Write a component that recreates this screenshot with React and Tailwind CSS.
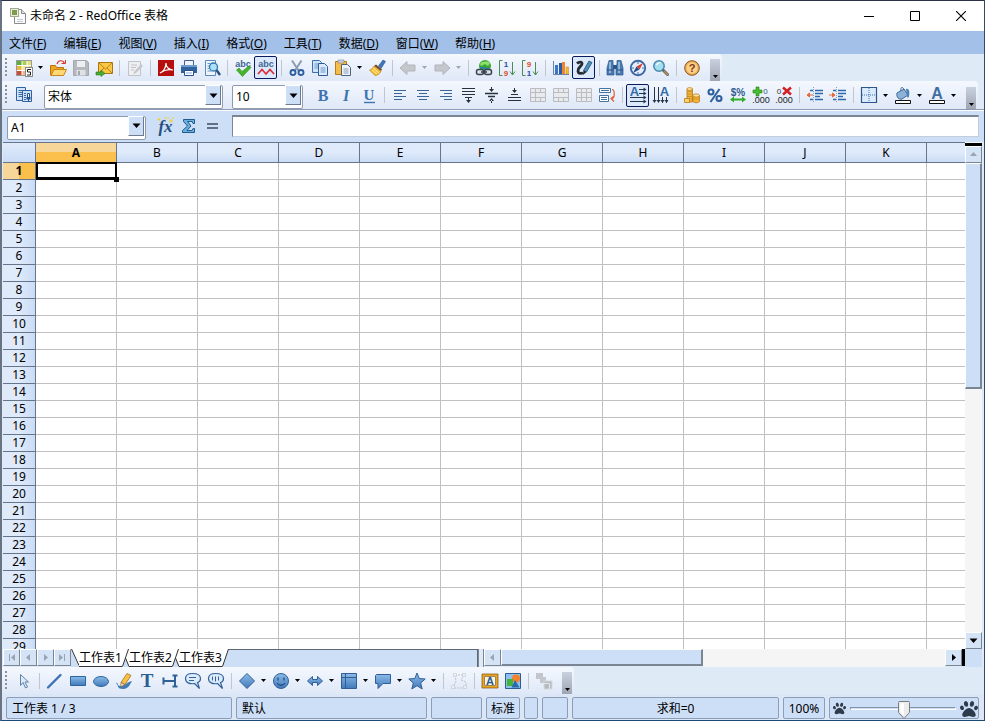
import { useState } from "react";
import { FaPaw } from "react-icons/fa";

const menus = [
    ["文件", "F"],
    ["编辑", "E"],
    ["视图", "V"],
    ["插入", "I"],
    ["格式", "O"],
    ["工具", "T"],
    ["数据", "D"],
    ["窗口", "W"],
    ["帮助", "H"],
];

const columns = ["A", "B", "C", "D", "E", "F", "G", "H", "I", "J", "K"];
const rows = Array.from({ length: 29 }, (_, i) => i + 1);
const sheets = ["工作表1", "工作表2", "工作表3"];

// Glyphs on an 18x18 grid
const icons = {
    document: (
        <>
            <path d="M5.500 2.500h7l4 4v10h-11z" fill="#fafafa" stroke="#8b8b8b" />
            <path d="M12.500 2.500v4h4" fill="#ddd" stroke="#8b8b8b" />
            <path d="M8 12.500h6M8 14.500h6" stroke="#c3cbd2" />
            <rect x="1.500" y="1.500" width="8" height="8" fill="#e9efdc" stroke="#a3aa94" />
            <rect x="3" y="3" width="5" height="5" fill="#7f9a4a" />
        </>
    ),
    newSheet: (
        <>
            <rect x="1.500" y="1.500" width="15" height="15" fill="#fff" stroke="#999" />
            <path d="M2 2h5v4H2z" fill="#5fae3c" />
            <path d="M7 2h5v4H7z" fill="#a8cf5a" />
            <path d="M12 2h4v6h-4z" fill="#e4e27c" />
            <path d="M2 6h5v5H2z" fill="#e9b83a" />
            <path d="M7 6h5v5H7z" fill="#f6e7a0" />
            <path d="M2 11h5v5H2z" fill="#cf4a36" />
            <path d="M7 11h3v5H7z" fill="#f0b98c" />
            <path d="M7 2v14M12 2v7M2 6.500h14M2 11.500h8" stroke="#fff" />
            <rect x="10.500" y="8.500" width="7" height="9" fill="#fff" stroke="#888" />
            <path d="M16 10.500h-3.500v2.500h3v3H12" fill="none" stroke="#222" />
        </>
    ),
    open: (
        <>
            <path d="M1.500 16V6.500h5l1 2h7V16z" fill="#eda523" stroke="#b87410" />
            <path d="M2 16.500l3-6h12.500l-3 6z" fill="#ffd873" stroke="#c98516" />
            <path d="M8 5c1-4 6-4.500 7.500-.5" fill="none" stroke="#d8362a" strokeWidth="1.200" />
            <path d="M12.500 4.500h4V1" fill="none" stroke="#d8362a" />
        </>
    ),
    save: (
        <>
            <path d="M1.500 1.500h13l2 2v13h-15z" fill="#b5b8be" stroke="#a4a7ad" />
            <path d="M5 2h8v6H5z" fill="#eceef1" />
            <path d="M4.500 11h9v5.500h-9z" fill="#dfe1e5" />
            <path d="M6 12h2v4H6z" fill="#a4a7ad" />
        </>
    ),
    mail: (
        <>
            <path d="M3.500 3.500h14v11h-14z" fill="#fbc845" stroke="#a8770f" />
            <path d="M4 4l6.500 6 6.500-6M4 14l5-5M17 14l-5-5" fill="none" stroke="#b98414" />
            <path d="M1 13h5v-2l4 3.500-4 3V16H1z" fill="#49ad33" stroke="#2d7b1e" strokeWidth=".6" />
        </>
    ),
    edit: (
        <>
            <path d="M2.500 2.500h12v14h-12z" fill="#eeeff1" stroke="#c0c3c8" />
            <path d="M5 6h6M5 8.500h5M5 11h3" stroke="#c0c3c8" />
            <path d="M8 13l7-8 2 2-7 7-2.500 1z" fill="#c3c6cb" />
        </>
    ),
    pdf: (
        <>
            <path d="M1 1h16v16H1z" fill="#b80d0d" />
            <path d="M3 14c3-1 6-5 6-10 0 4 3 7 7 7-4-1-9 0-13 3z" fill="none" stroke="#fff" strokeWidth="1.200" />
        </>
    ),
    print: (
        <>
            <path d="M4.500 1.500h9v5h-9z" fill="#eef4fb" stroke="#41628f" />
            <path d="M1 6h16v8H1z" fill="#2f639f" />
            <path d="M1 6h16v2H1z" fill="#6f9bcb" />
            <path d="M4.500 11.500h9v5h-9z" fill="#fff" stroke="#2b5387" />
            <path d="M6 14h6" stroke="#7fa9d6" />
        </>
    ),
    preview: (
        <>
            <path d="M2.500 1.500h10v15h-10z" fill="#eef5fc" stroke="#5b88bd" />
            <path d="M4.500 4.500h3M4.500 7h2M4.500 9.500h2M4.500 12h4" stroke="#6c94c4" />
            <circle cx="10.500" cy="8" r="4" fill="#aee0f6" stroke="#2e7bb0" strokeWidth="1.300" />
            <path d="M13.500 11l3.500 5" stroke="#27517f" strokeWidth="2.400" />
        </>
    ),
    spell: (
        <>
            <text x="9" y="7.500" textAnchor="middle" fontSize="9" fontWeight="700" fill="#3c6694">abc</text>
            <path d="M2.500 11L5 9l3 3.500L15 7l2 1.500-8.500 9z" fill="#45b52b" stroke="#2a871b" strokeWidth=".6" />
        </>
    ),
    autoSpell: (
        <>
            <text x="9" y="7.500" textAnchor="middle" fontSize="9" fontWeight="700" fill="#3c6694">abc</text>
            <path d="M1 15l4-4.500L9 15l4-4.500 4 4.500" fill="none" stroke="#dc2a35" strokeWidth="1.600" />
        </>
    ),
    cut: (
        <>
            <path d="M4 1.500l6.500 10M13.500 1.500L7 11.500" stroke="#8b9cb1" strokeWidth="2" />
            <circle cx="5" cy="13.500" r="2.500" fill="none" stroke="#2e5f9e" strokeWidth="1.900" />
            <circle cx="13" cy="13.500" r="2.500" fill="none" stroke="#2e5f9e" strokeWidth="1.900" />
        </>
    ),
    copy: (
        <>
            <path d="M1.500 1.500h7l2 2v10h-9z" fill="#cfe3f8" stroke="#3a70b0" />
            <path d="M3.500 5h5M3.500 7h4M3.500 9h4" stroke="#6a97cb" />
            <path d="M7.500 4.500h6l3 3v9h-9z" fill="#dcebfb" stroke="#2a5d9a" />
            <path d="M9.500 9h5M9.500 11h5M9.500 13h5" stroke="#6a97cb" />
        </>
    ),
    paste: (
        <>
            <path d="M1.500 2.500h11v13h-11z" fill="#f5bd45" stroke="#b67d18" />
            <path d="M4 1h6v3H4z" fill="#c9ced6" stroke="#808893" strokeWidth=".6" />
            <path d="M7.500 5.500h6l3 3v8h-9z" fill="#eef3f8" stroke="#4d6480" />
            <path d="M9.500 10h5M9.500 12h5M9.500 14h5" stroke="#8aa0bb" />
        </>
    ),
    brush: (
        <>
            <path d="M10.500 7L15 1l2.500 1.500-4.500 7z" fill="#3f76ba" stroke="#27548f" strokeWidth=".6" />
            <path d="M8 5.500l6 5-1 1.500-7-5z" fill="#6b4a33" />
            <path d="M6 7l7 5.500c-2 3-4 4-6 4L1.500 11c2 0 3-2 4.500-4z" fill="#f8bd32" stroke="#c07f16" strokeWidth=".7" />
            <path d="M4 11l5 4M5 9l6 5" stroke="#fff0a7" />
        </>
    ),
    undo: <path d="M1 9l7-6.500v3.500h8v6H8v3.500z" fill="#c4c7cc" stroke="#b2b5bb" />,
    redo: <path d="M17 9l-7-6.500v3.500H2v6h8v3.500z" fill="#c4c7cc" stroke="#b2b5bb" />,
    link: (
        <>
            <circle cx="10" cy="7" r="6" fill="#3ea72e" />
            <path d="M5 5c2-3 8-3 10-1l-2 3-3-2-4 2z" fill="#8ee06e" />
            <path d="M5 9c3-1 6 0 9 1" stroke="#2b7cc0" fill="none" strokeWidth="1.500" />
            <rect x="1.500" y="10.500" width="7" height="5" rx="2" fill="#dce2e9" stroke="#3a4350" strokeWidth="1.500" />
            <rect x="9.500" y="10.500" width="7" height="5" rx="2" fill="#dce2e9" stroke="#3a4350" strokeWidth="1.500" />
            <path d="M6 13h6" stroke="#3a4350" strokeWidth="1.600" />
        </>
    ),
    sortAsc: (
        <>
            <path d="M4.500 1.500h-3v15h3M14.500 3v13M12 12.500l2.500 3.500 2.500-3.500" fill="none" stroke="#4d8d52" />
            <text x="8" y="7.500" textAnchor="middle" fontSize="8" fontWeight="700" fill="#2c4fa5">1</text>
            <text x="8" y="17" textAnchor="middle" fontSize="8" fontWeight="700" fill="#dd4c2c">9</text>
        </>
    ),
    sortDesc: (
        <>
            <path d="M4.500 1.500h-3v15h3M14.500 3v13M12 12.500l2.500 3.500 2.500-3.500" fill="none" stroke="#4d8d52" />
            <text x="8" y="7.500" textAnchor="middle" fontSize="8" fontWeight="700" fill="#dd4c2c">9</text>
            <text x="8" y="17" textAnchor="middle" fontSize="8" fontWeight="700" fill="#2c4fa5">1</text>
        </>
    ),
    chart: (
        <>
            <path d="M1.500 2v13.500H17" fill="none" stroke="#6884a8" />
            <path d="M3 6h3v9H3z" fill="#3878c6" />
            <path d="M7 4h3v11H7z" fill="#285da6" />
            <path d="M10 3h3v12h-3z" fill="#f5832a" />
            <path d="M14 8h2.500v7H14z" fill="#f0c02c" stroke="#c9812a" strokeWidth=".5" />
        </>
    ),
    draw: (
        <>
            <path d="M2 4.500c2-2 5.500-2 5 .5S2.500 8.500 3 12s4 2.500 5 1.500" fill="none" stroke="#252b33" strokeWidth="2.800" />
            <path d="M8.500 11.500L14 2l3 1.500-5.500 9.500z" fill="#4a8fbe" stroke="#234d74" strokeWidth=".8" />
            <path d="M8.500 11.500l3 1.500-3.500 3z" fill="#222" />
        </>
    ),
    find: (
        <>
            <path d="M3 1.500h4v3.500l1 3v8H1V9z" fill="#4a7ab1" stroke="#2b568a" strokeWidth=".7" />
            <path d="M15 1.500h-4v3.500l-1 3v8h7V9z" fill="#4a7ab1" stroke="#2b568a" strokeWidth=".7" />
            <path d="M7 6h4v4H7z" fill="#2b568a" />
            <path d="M4 3v11M13 3v11" stroke="#a9c8e8" strokeWidth="1.500" />
            <path d="M1 11h6M11 11h6" stroke="#274e7e" />
        </>
    ),
    navigator: (
        <>
            <circle cx="9" cy="9" r="7.200" fill="#e3eefa" stroke="#3d68a3" strokeWidth="1.900" />
            <path d="M9 3v2M9 13v2M3 9h2M13 9h2" stroke="#4772a8" />
            <path d="M14 4l-3.500 6.500-3-3z" fill="#d64133" />
            <path d="M4 14l3.500-6.500 3 3z" fill="#274f8c" />
        </>
    ),
    magnifier: (
        <>
            <circle cx="7" cy="7" r="5.200" fill="#a5deee" stroke="#4689ac" strokeWidth="1.500" />
            <path d="M4.500 6c1-2 3-2.500 4-2" fill="none" stroke="#fff" strokeWidth="1.300" />
            <path d="M11.500 11.500l4 4" stroke="#5a6673" strokeWidth="3" strokeLinecap="round" />
            <path d="M12.500 12.500l3 3" stroke="#c98a43" strokeWidth="1.400" strokeLinecap="round" />
        </>
    ),
    help: (
        <>
            <circle cx="9" cy="9" r="7.300" fill="#f0a94a" stroke="#8a5a26" />
            <circle cx="9" cy="9" r="5.700" fill="#fbd08a" />
            <text x="9" y="13" textAnchor="middle" fontSize="11" fontWeight="700" fill="#7a3d12">?</text>
        </>
    ),
    styles: (
        <>
            <path d="M1.500 1.500h9v13h-9z" fill="#d5e5f8" stroke="#2f62a4" />
            <path d="M3.500 4.500h5M3.500 6.500h4M3.500 8.500h4M3.500 10.500h4" stroke="#3968a6" />
            <path d="M7.500 4.500h9v11h-9z" fill="#cfe1f5" stroke="#2f62a4" />
            <path d="M9 7.500h2M9 9.500h2M9 11.500h2M9 13.500h2" stroke="#3968a6" />
            <path d="M12.500 7.500h2v4h-2z" fill="#f4f8fd" stroke="#2c5388" />
            <path d="M11.500 11h4v2.500h-1.500v2h-1v-2h-1.500z" fill="#2c5388" />
        </>
    ),
    bold: <text x="9" y="15" textAnchor="middle" fontSize="16" fontWeight="700" fontFamily="Liberation Serif, serif" fill="#3e73b0">B</text>,
    italic: <text x="9" y="15" textAnchor="middle" fontSize="16" fontWeight="700" fontStyle="italic" fontFamily="Liberation Serif, serif" fill="#3e73b0">I</text>,
    underline: (
        <>
            <text x="9" y="14" textAnchor="middle" fontSize="15" fontWeight="700" fontFamily="Liberation Serif, serif" fill="#3e73b0">U</text>
            <path d="M4 16.500h11" stroke="#3e73b0" strokeWidth="1.400" />
        </>
    ),
    left: <path d="M3 4.500h12M3 7.500h8M3 10.500h12M3 13.500h8" stroke="#3a6496" />,
    center: <path d="M3 4.500h12M5 7.500h8M3 10.500h12M5 13.500h8" stroke="#3a6496" />,
    right: <path d="M3 4.500h12M7 7.500h8M3 10.500h12M7 13.500h8" stroke="#3a6496" />,
    top: (
        <>
            <path d="M2 2.500h13M2 5.500h13M2 8.500h13M5 11.500h7" stroke="#27313c" />
            <path d="M6 14h5l-2.500 3zM8 12h1v3H8z" fill="#27313c" />
        </>
    ),
    middle: (
        <>
            <path d="M2 7.500h13M5 10.500h7" stroke="#27313c" strokeWidth="1.400" />
            <path d="M6 3h5L8.500 6zM8 1h1v3H8zM6 15h5l-2.500-3zM8 14h1v3H8z" fill="#27313c" />
        </>
    ),
    bottom: (
        <>
            <path d="M5 8.500h7M2 11.500h13M2 14.500h13" stroke="#27313c" />
            <path d="M6 4h5L8.500 7zM8 2h1v3H8z" fill="#27313c" />
        </>
    ),
    merge: (
        <>
            <path d="M2 2h14v14H2z" fill="#e9eaec" />
            <path d="M1.500 2.500h15v13h-15zM1.500 6.500h15M1.500 11.500h15M6.500 2.500v13M11.500 2.500v4M11.500 11.500v4" fill="none" stroke="#b9bcc2" />
        </>
    ),
    split: (
        <>
            <path d="M2 2h14v14H2z" fill="#e9eaec" />
            <path d="M1.500 2.500h15v13h-15zM1.500 6.500h15M1.500 11.500h15M6.500 2.500v4M11.500 2.500v4M6.500 11.500v4M11.500 11.500v4" fill="none" stroke="#b9bcc2" />
        </>
    ),
    cells: (
        <>
            <path d="M2 2h14v14H2z" fill="#e9eaec" />
            <path d="M1.500 2.500h15v13h-15zM1.500 6.500h15M1.500 11.500h15M6.500 2.500v13M11.500 2.500v13" fill="none" stroke="#b9bcc2" />
        </>
    ),
    wrap: (
        <>
            <path d="M1.500 2.500h11v4h-11zM1.500 9.500h9v6h-9z" fill="#fff" stroke="#45749f" />
            <path d="M3 4.500h8M3 11.500h6M3 13.500h6" stroke="#3f719f" />
            <path d="M14 3.500c3 0 3 9 0 9M16 10l-3 2.500 3 3" fill="none" stroke="#e15d35" strokeWidth="1.200" />
        </>
    ),
    textHoriz: (
        <>
            <text x="5.500" y="10" textAnchor="middle" fontSize="13" fontWeight="700" fill="#346ca8">A</text>
            <path d="M10 3.500h6M10 7.500h6M1 11.500h15M1 15.500h15" stroke="#26364a" />
            <path d="M14.500 1.500l3 2-3 2zM14.500 5.500l3 2-3 2zM14.500 9.500l3 2-3 2zM14.500 13.500l3 2-3 2z" fill="#26364a" />
        </>
    ),
    textVert: (
        <>
            <text x="12.500" y="10" textAnchor="middle" fontSize="13" fontWeight="700" fill="#346ca8">A</text>
            <path d="M2.500 1v15M6.500 1v15M10.500 11v6M14.500 11v6" stroke="#26364a" />
            <path d="M.5 14l2 3 2-3zM4.500 14l2 3 2-3zM8.500 14l2 3 2-3zM12.500 14l2 3 2-3z" fill="#26364a" />
        </>
    ),
    currency: (
        <>
            <path d="M4 3h5.500v13H4z" fill="#f2b33a" stroke="#b97a1a" strokeWidth=".8" />
            <path d="M4 5.500h5.500M4 8h5.500M4 10.500h5.500M4 13h5.500" stroke="#c98a22" strokeWidth=".8" />
            <ellipse cx="6.700" cy="3" rx="2.800" ry="1.400" fill="#ffe39a" stroke="#b97a1a" strokeWidth=".7" />
            <path d="M1.500 12.500h5v4h-5z" fill="#ffd56c" stroke="#b97a1a" strokeWidth=".8" />
            <path d="M10 9.500v6c1 1.700 5.500 1.700 6.500 0v-6z" fill="#f2b33a" stroke="#b97a1a" strokeWidth=".8" />
            <path d="M10 12c1 1.500 5.500 1.500 6.500 0" fill="none" stroke="#c98a22" strokeWidth=".8" />
            <ellipse cx="13.200" cy="9.500" rx="3.200" ry="1.600" fill="#ffe39a" stroke="#b97a1a" strokeWidth=".8" />
        </>
    ),
    percent: (
        <>
            <circle cx="5" cy="6" r="2.500" fill="none" stroke="#2f609d" strokeWidth="2.100" />
            <circle cx="13" cy="12.500" r="2.500" fill="none" stroke="#2f609d" strokeWidth="2.100" />
            <path d="M13.500 3l-9 13" stroke="#2f609d" strokeWidth="2" />
        </>
    ),
    standard: (
        <>
            <text x="9" y="9.500" textAnchor="middle" fontSize="10" fontWeight="700" fill="#315d92">$%</text>
            <path d="M3 13.500h12" stroke="#2fae2b" strokeWidth="2" />
            <path d="M5 10.500l-4 3 4 3zM13 10.500l4 3-4 3z" fill="#2fae2b" />
        </>
    ),
    addDecimal: (
        <>
            <path d="M4 1h3v3h3v3H7v3H4V7H1V4h3z" fill="#45bd2d" stroke="#238517" strokeWidth=".6" />
            <text x="13.500" y="7.500" textAnchor="middle" fontSize="8" fill="#33567f">0</text>
            <text x="9" y="17" textAnchor="middle" fontSize="9" fill="#222">.000</text>
        </>
    ),
    delDecimal: (
        <>
            <text x="4" y="7.500" textAnchor="middle" fontSize="8" fill="#333">0</text>
            <path d="M8 1.500l8 7M16 1.500l-8 7" stroke="#d41f24" strokeWidth="2.500" />
            <text x="9" y="17" textAnchor="middle" fontSize="9" fill="#222">.000</text>
        </>
    ),
    indentLess: (
        <>
            <path d="M4 4.500h3M9 4.500h8M9 7.500h8M9 10.500h5M4 13.500h3M9 13.500h8" stroke="#2f68aa" strokeWidth="1.400" />
            <path d="M7.500 1v16" stroke="#7f9fc6" strokeDasharray="1 1" />
            <path d="M7 9H3M3.500 7L1 9l2.500 2z" fill="#e36a36" stroke="#e36a36" />
        </>
    ),
    indentMore: (
        <>
            <path d="M4 4.500h3M9 4.500h8M9 7.500h8M9 10.500h5M4 13.500h3M9 13.500h8" stroke="#2f68aa" strokeWidth="1.400" />
            <path d="M7.500 1v16" stroke="#7f9fc6" strokeDasharray="1 1" />
            <path d="M0 9h4M3.500 7L6 9l-2.500 2z" fill="#e36a36" stroke="#e36a36" />
        </>
    ),
    borders: (
        <>
            <path d="M1.500 1.500h15v15h-15z" fill="#dcebfc" stroke="#2e568c" strokeWidth="1.200" />
            <path d="M9 2v14M2 9h14" stroke="#3f73b3" strokeDasharray="1 1" />
        </>
    ),
    fill: (
        <>
            <path d="M3 7l7-4 4 6-6 4c-3 1-6-2-5-6z" fill="#8db2d8" stroke="#3e6898" />
            <path d="M12 3c3-1 4 3 3 7 0 2-2 2-2 0z" fill="#4d82b9" />
            <path d="M7 5c-1-4 2-5 3-1" fill="none" stroke="#3e6898" />
            <path d="M1.500 14.500h15v3h-15z" fill="#fff" stroke="#111" />
        </>
    ),
    fontColor: (
        <>
            <text x="9" y="13" textAnchor="middle" fontSize="16" fontWeight="700" fill="#3e6e9f">A</text>
            <path d="M1.500 14.500h15v3h-15z" fill="#fff" stroke="#111" />
        </>
    ),
    fx: (
        <>
            <path d="M2 1v3M.5 2.500h3M8 0v2M14 2v4M12 4h4M16 0v2M4 6v2M11 0v2" stroke="#f1d02b" />
            <text x="8.500" y="15" textAnchor="middle" fontSize="17" fontStyle="italic" fontWeight="700" fontFamily="Liberation Serif, serif" fill="#264f7e">fx</text>
        </>
    ),
    sum: <path d="M3.500 2.500h11v4h-1.500l-1-2H7.500L11 9l-4 4.500h5l1-2h1.500v4h-12v-2L7.500 9l-4-4.500z" fill="#68b0df" stroke="#24598c" />,
    equals: <path d="M4 7h11M4 11h11" stroke="#3d4b5d" strokeWidth="1.600" />,
    pointer: <path d="M5.500 2.500v11l2.500-3 2.500 5.500 2-1-2.500-5h3.500z" fill="#dfeaf8" stroke="#6183ae" />,
    line: <path d="M2 15.500L14.500 3" stroke="#3d73b4" strokeWidth="2.400" strokeLinecap="round" />,
    rect: <path d="M1.500 4.500h15v9h-15z" fill="url(#blue)" stroke="#2f659f" />,
    ellipse: <ellipse cx="9" cy="9.500" rx="7.500" ry="5" fill="url(#blue)" stroke="#2f659f" />,
    freeform: (
        <>
            <path d="M1 11c3-1 0 3 5 3 5-1 6-4 11-5-3 6-5 8-9 8-6 0-4-3-7-6z" fill="#417cb9" />
            <path d="M6 10.500l6-9 4 2-6 9z" fill="#f6c347" stroke="#a96b19" strokeWidth=".8" />
            <path d="M6 10.500l4 2-4.500 2.500z" fill="#e9d3a8" stroke="#775522" strokeWidth=".5" />
        </>
    ),
    text: <text x="9" y="15" textAnchor="middle" fontSize="19" fontWeight="700" fontFamily="Liberation Serif, serif" fill="#285f96">T</text>,
    dimension: <path d="M2.500 5.500v7M2.500 9h12M14 3.500v11M11.500 3.500h5M11.500 14.500h5" fill="none" stroke="#2f6398" strokeWidth="2" />,
    balloonH: (
        <>
            <path d="M8.500 1.500c5 0 8 2 8 5 0 2-1 3.500-3 4l2 6-5-5c-5 1-9-1-9-5C1.500 3.500 4 1.500 8.500 1.500z" fill="#dcebfb" stroke="#33639c" strokeWidth="1.200" />
            <path d="M5 5.500h7M5 8.500h5" stroke="#33639c" />
        </>
    ),
    balloonV: (
        <>
            <path d="M8.500 1.500c5 0 8 2 8 5 0 2-1 3.500-3 4l2 6-5-5c-5 1-9-1-9-5C1.500 3.500 4 1.500 8.500 1.500z" fill="#dcebfb" stroke="#33639c" strokeWidth="1.200" />
            <path d="M5.500 4.500v4M8.500 4.500v5M11.500 4.500v4" stroke="#33639c" />
        </>
    ),
    diamond: <path d="M9 1.500L16.500 9 9 16.500 1.500 9z" fill="url(#blue)" stroke="#305f98" />,
    smiley: (
        <>
            <circle cx="9" cy="9" r="7.500" fill="url(#blue)" stroke="#305f98" />
            <path d="M6 5.500v3M12 5.500v3M5 11c2 3 6 3 8 0" fill="none" stroke="#204e83" strokeWidth="1.300" />
        </>
    ),
    arrows: <path d="M1.500 9l5-4.500v3h5v-3l5 4.500-5 4.500v-3h-5v3z" fill="url(#blue)" stroke="#305f98" />,
    flow: (
        <>
            <path d="M1.500 1.500h15v15h-15z" fill="url(#blue)" stroke="#305f98" />
            <path d="M5.500 2v14M2 5.500h14" stroke="#315d91" />
        </>
    ),
    callout: <path d="M2.500 2.500h14v9H9l-5 5v-5H1.500v-8z" fill="url(#blue)" stroke="#305f98" />,
    star: <path d="M9 1l2.200 5.500 6 .5-4.500 4 1.500 6L9 13.700 3.800 17l1.500-6L.8 7l6-.5z" fill="url(#blue)" stroke="#305f98" />,
    points: (
        <>
            <path d="M5 3h9l-3 5 5 2v6H3l3-7z" fill="none" stroke="#bec2c9" strokeDasharray="2 1" />
            <path d="M3.500 1.500h3v3h-3zM12.500 1.500h3v3h-3zM1.500 13.500h3v3h-3zM13.500 13.500h3v3h-3z" fill="#eef0f3" stroke="#c3c7cd" strokeWidth=".6" />
        </>
    ),
    fontwork: (
        <>
            <path d="M2 3h14v12H2z" fill="#fff6d9" stroke="#e9a51e" strokeWidth="2" />
            <path d="M1 2h16v14H1zM3.500 4.500h11v9h-11z" fill="none" stroke="#76511a" strokeWidth=".7" />
            <text x="9" y="13" textAnchor="middle" fontSize="11" fontWeight="700" fill="#245b9b">A</text>
        </>
    ),
    picture: (
        <>
            <path d="M1.500 1.500h15v15h-15z" fill="#8fc0ee" stroke="#2f5d91" />
            <circle cx="12" cy="6.500" r="4" fill="#f6812c" />
            <path d="M3 7h6v7H3z" fill="#45b438" />
            <path d="M11 8l4.500 7.500h-8z" fill="#276bb0" />
        </>
    ),
    extrusion: (
        <>
            <path d="M1 1h7v6H1zM5 5h6v6H5z" fill="#c3c7cd" />
            <path d="M9 9h8v8H9z" fill="#b6bac1" stroke="#d6d8dc" />
            <path d="M9 11.500h5.500V17" fill="none" stroke="#e6e8eb" />
        </>
    ),
};

// "|" is a separator, "v" a drop-down arrow ("x" when disabled), "*" marks a pressed tool
const standardBar = [
    "newSheet", "v", "open", "save", "mail", "|", "edit", "|", "pdf", "print", "preview", "|",
    "spell", "autoSpell*", "|", "cut", "copy", "paste", "v", "brush", "|", "undo", "x", "redo", "x", "|",
    "link", "sortAsc", "sortDesc", "|", "chart", "draw*", "|", "find", "navigator", "magnifier", "|", "help",
];

const formatBar = [
    "bold", "italic", "underline", "|", "left", "center", "right", "top", "middle", "bottom",
    "merge", "split", "cells", "wrap", "|", "textHoriz*", "textVert", "|",
    "currency", "percent", "standard", "addDecimal", "delDecimal", "|",
    "indentLess", "indentMore", "|", "borders", "v", "fill", "v", "fontColor", "v",
];

const drawBar = [
    "pointer", "|", "line", "rect", "ellipse", "freeform", "text", "dimension", "balloonH", "balloonV", "|",
    "diamond", "v", "smiley", "v", "arrows", "v", "flow", "v", "callout", "v", "star", "v", "|",
    "points", "|", "fontwork", "picture", "|", "extrusion",
];

function Icon({ name }) {
    return (
        <svg width="18" height="18" viewBox="0 0 18 18" className="shrink-0 overflow-visible font-['Liberation_Sans',sans-serif]" aria-hidden="true">
            {icons[name]}
        </svg>
    );
}

function Triangle({ dir = "down", className = "text-black" }) {
    const shapes = {
        down: "M.5 2.500h8L4.500 7z",
        up: "M1 6h7L4.500 2z",
        left: "M6 1v7L2 4.500z",
        right: "M3 1v7l4-3.500z",
        first: "M8 1v7L4 4.500zM2 1h1v7H2z",
        last: "M1 1v7l4-3.500zM6 1h1v7H6z",
    };
    return (
        <svg width="9" height="9" viewBox="0 0 9 9" className={className} aria-hidden="true">
            <path d={shapes[dir]} fill="currentColor" />
        </svg>
    );
}

function Tools({ items }) {
    return items.map((item, i) => {
        if (item === "|") {
            return (
                <span key={i} className="flex w-2 shrink-0 justify-center">
                    <span className="h-4 w-px bg-[#c0c5ce]" />
                </span>
            );
        }
        if (item === "v" || item === "x") {
            return (
                <button key={i} aria-label="更多" className="flex h-6 w-[11px] shrink-0 items-center justify-center">
                    <svg width="5" height="3" viewBox="0 0 5 3" aria-hidden="true">
                        <path d="M0 0h5L2.500 3z" fill={item === "v" ? "#000" : "#a3a6ac"} />
                    </svg>
                </button>
            );
        }
        const pressed = item.endsWith("*");
        const name = item.replace("*", "");
        return (
            <button
                key={i}
                aria-label={name}
                aria-pressed={pressed}
                className={[
                    "flex h-[23px] w-[23px] shrink-0 items-center justify-center",
                    pressed ? "rounded-xs border border-[#0a1a5c] bg-[#dce9fb]" : "",
                ].join(" ")}
            >
                <Icon name={name} />
            </button>
        );
    });
}

function Grip() {
    return <span className="mr-[5px] ml-[3px] h-5 w-0.5 shrink-0 bg-[repeating-linear-gradient(#8c9099_0_2px,transparent_2px_4px)]" />;
}

function Overflow() {
    return (
        <button aria-label="工具栏选项" className="ml-[7px] flex h-[22px] w-2.5 shrink-0 items-end justify-center self-end bg-linear-to-b from-[#c9d1e0] to-[#9fa5b1] pb-[3px]">
            <svg width="5" height="3" viewBox="0 0 5 3" aria-hidden="true">
                <path d="M0 0h5L2.500 3z" />
            </svg>
        </button>
    );
}

function Toolbar({ children, className }) {
    return (
        <div className={`flex shrink-0 bg-[#deeaf6] ${className}`}>
            <div className="flex items-center rounded-r-sm bg-linear-to-b from-[#f4f8fe] to-[#dfe8f8] pr-0.5">{children}</div>
        </div>
    );
}

function Combo({ label, value, className }) {
    return (
        <div className={`relative shrink-0 ${className}`}>
            <select
                aria-label={label}
                className="h-full w-full appearance-none rounded-xs border border-[#8f9aac] bg-white pl-[3px] text-xs text-black"
                defaultValue={value}
            >
                <option>{value}</option>
            </select>
            <span className="pointer-events-none absolute inset-y-0.5 right-0.5 flex w-4 items-center justify-center border border-t-white border-r-[#6f7a8c] border-b-[#6f7a8c] border-l-white bg-[#cddff7]">
                <Triangle />
            </span>
        </div>
    );
}

function ScrollButton({ dir, disabled }) {
    return (
        <button
            aria-label={dir}
            disabled={disabled}
            className="flex h-[17px] w-[17px] shrink-0 items-center justify-center border border-t-white border-r-[#7c8594] border-b-[#7c8594] border-l-white bg-[#d5e3f6]"
        >
            <Triangle dir={dir} className={disabled ? "text-[#9aa3b1]" : "text-black"} />
        </button>
    );
}

function TitleBar() {
    return (
        <header className="flex h-[30px] shrink-0 items-center bg-white pl-[7px]">
            <Icon name="document" />
            <h1 className="ml-[3px] grow text-xs">未命名 2 - RedOffice 表格</h1>
            <button aria-label="最小化" className="flex h-full w-[46px] items-center justify-center">
                <svg width="10" height="10" viewBox="0 0 10 10"><path d="M0 5.500h10" stroke="#000" /></svg>
            </button>
            <button aria-label="最大化" className="flex h-full w-[46px] items-center justify-center">
                <svg width="10" height="10" viewBox="0 0 10 10"><path d="M.5.5h9v9h-9z" fill="none" stroke="#000" /></svg>
            </button>
            <button aria-label="关闭" className="flex h-full w-[46px] items-center justify-center">
                <svg width="10" height="10" viewBox="0 0 10 10"><path d="M0 0l10 10M10 0L0 10" stroke="#000" strokeWidth="1.100" /></svg>
            </button>
        </header>
    );
}

function Sheet() {
    const head = "border-r border-b border-[#66758a] p-0 text-center text-xs leading-4";
    return (
        <div className="min-w-0 grow overflow-hidden">
            <table className="w-full table-fixed border-separate border-spacing-0">
                <colgroup>
                    <col className="w-[33px]" />
                    {columns.map((c) => (
                        <col key={c} className="w-[81px]" />
                    ))}
                    <col />
                </colgroup>
                <thead>
                    <tr className="h-[21px]">
                        <th className={`${head} border-t bg-linear-to-b from-[#e0ebfb] to-[#cadcf6]`} aria-label="全选" />
                        {columns.map((c, i) => (
                            <th
                                key={c}
                                scope="col"
                                className={[
                                    head,
                                    "border-t",
                                    i === 0
                                        ? "bg-linear-to-b from-[#f7d69a] from-50% to-[#fac04b] to-50% font-bold"
                                        : "bg-linear-to-b from-[#dfeafa] from-50% to-[#cadcf6] font-normal",
                                ].join(" ")}
                            >
                                {c}
                            </th>
                        ))}
                        <th className="border-t border-b border-[#66758a] bg-linear-to-b from-[#dfeafa] from-50% to-[#cadcf6]" aria-label="L" />
                    </tr>
                </thead>
                <tbody>
                    {rows.map((r) => (
                        <tr key={r} className="h-[17px]">
                            <th
                                scope="row"
                                className={[
                                    head,
                                    r === 1
                                        ? "bg-linear-to-r from-[#f7d69a] from-50% to-[#fac04b] to-50% font-bold"
                                        : "bg-linear-to-r from-[#dfeafa] from-50% to-[#cadcf6] font-normal",
                                ].join(" ")}
                            >
                                {r}
                            </th>
                            {columns.map((c) => (
                                <td key={c} className="relative border-r border-b border-[#c0c0c0] bg-white p-0">
                                    {r === 1 && c === "A" && (
                                        <span className="absolute -inset-px left-0 z-10 border-2 border-b-[3px] border-black">
                                            <span className="absolute -right-1 -bottom-[5px] h-[5px] w-[5px] bg-black" />
                                        </span>
                                    )}
                                </td>
                            ))}
                            <td className="border-b border-[#c0c0c0] bg-white p-0" />
                        </tr>
                    ))}
                </tbody>
            </table>
        </div>
    );
}

function SheetTabs() {
    return (
        <div className="flex h-[18px] w-[407px] shrink-0 border-r border-[#5f6875] bg-[#cddff7]" role="tablist">
            <svg width="8" height="18" viewBox="0 0 8 18" className="shrink-0" aria-hidden="true">
                <path d="M0 0h8v17z" fill="#fff" />
                <path d="M.5 0L8 16.500" stroke="#333" fill="none" />
            </svg>
            {sheets.map((name, i) => (
                <div key={name} className="flex shrink-0">
                    <button
                        role="tab"
                        aria-selected={i === 0}
                        className="w-[43px] border-b border-[#333] bg-white text-xs leading-4 whitespace-nowrap"
                    >
                        {name}
                    </button>
                    <svg width="7" height="18" viewBox="0 0 7 18" className="shrink-0" aria-hidden="true">
                        <path d="M0 0h7L0 17.500z" fill="#fff" />
                        {i < 2 && <path d="M7 0v17.500L3.500 9z" fill="#fff" />}
                        <path d={i < 2 ? "M6.500 0L.5 17.500M3.500 9l3.500 8.500" : "M6.500 0L.5 17.500"} stroke="#333" fill="none" />
                    </svg>
                </div>
            ))}
            <div className="grow border-t border-[#5f6875]" />
        </div>
    );
}

function StatusCell({ children, className }) {
    return (
        <div className={`flex h-[22px] items-center rounded-xs border border-[#8c9db8] bg-[#cddff7] pt-0.5 text-xs whitespace-nowrap ${className}`}>
            {children}
        </div>
    );
}

function ZoomSlider() {
    const [pos, setPos] = useState(51);
    return (
        <div className="relative h-5 grow">
            <input
                type="range"
                aria-label="缩放"
                value={pos}
                onChange={(e) => setPos(Number(e.target.value))}
                className="h-5 w-full appearance-none bg-transparent [&::-webkit-slider-runnable-track]:h-[3px] [&::-webkit-slider-runnable-track]:border [&::-webkit-slider-runnable-track]:border-t-[#8593a9] [&::-webkit-slider-runnable-track]:border-r-white [&::-webkit-slider-runnable-track]:border-b-white [&::-webkit-slider-runnable-track]:border-l-[#8593a9] [&::-webkit-slider-thumb]:size-0 [&::-webkit-slider-thumb]:appearance-none"
            />
            <svg
                width="13"
                height="18"
                viewBox="0 0 13 18"
                className="pointer-events-none absolute top-0.5 -translate-x-1/2"
                style={{ left: `${pos}%` }}
                aria-hidden="true"
            >
                <path d="M1.500.5h10l.5 1v10L6.500 17.500 1 11.500v-10z" fill="#ececec" stroke="#777d86" />
                <path d="M3 2.500h3.500v12L3 11z" fill="#fff" />
            </svg>
        </div>
    );
}

export default function App() {
    return (
        <div className="flex h-screen flex-col overflow-hidden border-t border-r border-b border-l-2 border-t-[#2b3349] border-r-[#35486b] border-b-[#1d4a75] border-l-[#687383] bg-[#deeaf6] font-['Noto_Sans','Noto_Sans_CJK_SC',sans-serif] text-black">
            <svg width="0" height="0" className="absolute" aria-hidden="true">
                <linearGradient id="blue" x1="0" y1="0" x2="0" y2="1">
                    <stop offset="0" stopColor="#8bbbe9" />
                    <stop offset="1" stopColor="#4179b9" />
                </linearGradient>
            </svg>

            <TitleBar />

            <nav className="flex h-[23px] shrink-0 items-center gap-[17px] bg-[#a2c0e8] pt-0.5 pl-[7px] text-xs">
                {menus.map(([label, key]) => (
                    <button key={key} className="whitespace-nowrap">
                        {label}(<u>{key}</u>)
                    </button>
                ))}
            </nav>

            <Toolbar className="h-[27px]">
                <Grip />
                <Tools items={standardBar} />
                <Overflow />
            </Toolbar>

            <Toolbar className="h-[29px] border-b border-[#8f9bb0]">
                <Grip />
                <Tools items={["styles"]} />
                <Combo label="字体" value="宋体" className="mr-[9px] ml-[9px] h-6 w-[179px]" />
                <Combo label="字号" value="10" className="mr-2 h-6 w-[71px]" />
                <Tools items={formatBar} />
                <Overflow />
            </Toolbar>

            <div className="flex h-8 shrink-0 items-center border-t border-white bg-[#cddff7] pr-[5px] pb-0.5 pl-[5px]">
                <Combo label="名称框" value="A1" className="mr-2 h-6 w-[139px]" />
                <Tools items={["fx", "sum", "equals"]} />
                <input
                    aria-label="输入行"
                    className="ml-[9px] h-[22px] min-w-0 grow border border-t-2 border-t-[#7b8594] border-r-[#c3cedd] border-b-[#c3cedd] border-l-[#7b8594] bg-white px-1 text-xs"
                />
            </div>

            <main className="flex min-h-0 grow overflow-hidden pr-0.5 pl-px">
                <Sheet />
                <div className="flex w-[17px] shrink-0 flex-col bg-[#f5f5f5]">
                    <div className="mt-px h-[3px] shrink-0 bg-black" />
                    <ScrollButton dir="up" disabled />
                    <div className="h-[226px] shrink-0 border border-t-white border-r-2 border-r-[#7c8594] border-b-2 border-b-[#7c8594] border-l-white bg-[#cddff7]" />
                    <div className="grow" />
                    <ScrollButton dir="down" />
                </div>
            </main>

            <div className="flex h-[18px] shrink-0 pr-0.5 pl-px">
                <ScrollButton dir="first" disabled />
                <ScrollButton dir="left" disabled />
                <ScrollButton dir="right" disabled />
                <ScrollButton dir="last" disabled />
                <SheetTabs />
                <div className="w-[6px] shrink-0 border-r border-l border-[#7c8594] bg-[#deeaf6]" />
                <ScrollButton dir="left" disabled />
                <div className="h-[17px] w-[202px] border border-t-white border-r-2 border-r-[#7c8594] border-b-2 border-b-[#7c8594] border-l-white bg-[#cddff7]" />
                <div className="grow bg-[#f5f5f5]" />
                <ScrollButton dir="right" />
                <div className="h-[17px] w-[3px] bg-black" />
                <div className="w-[17px] bg-[#cddff7]" />
            </div>

            <Toolbar className="h-[27px]">
                <Grip />
                <Tools items={drawBar} />
                <Overflow />
            </Toolbar>

            <footer className="flex h-[26px] shrink-0 items-center gap-1 bg-[#dbe7f6] pt-px pr-[5px] pl-1">
                <StatusCell className="w-[226px] pl-[5px]">工作表 1 / 3</StatusCell>
                <StatusCell className="w-[191px] pl-[5px]">默认</StatusCell>
                <StatusCell className="w-[51px]" />
                <StatusCell className="w-[34px] justify-center">标准</StatusCell>
                <StatusCell className="w-3.5" />
                <StatusCell className="w-[26px]" />
                <StatusCell className="grow justify-center">求和=0</StatusCell>
                <StatusCell className="w-[42px] justify-center">100%</StatusCell>
                <StatusCell className="w-[150px] gap-1 pl-[3px]">
                    <FaPaw size={13} className="shrink-0 text-[#2f3a4a]" />
                    <ZoomSlider />
                    <FaPaw size={18} className="shrink-0 text-[#2f3a4a]" />
                </StatusCell>
            </footer>
        </div>
    );
}
